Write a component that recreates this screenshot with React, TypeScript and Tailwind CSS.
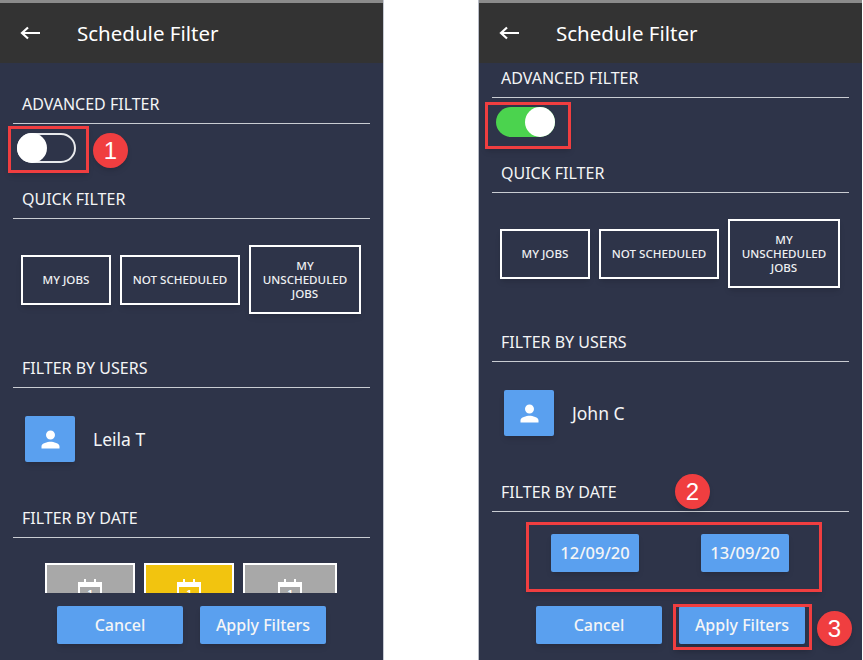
import { MdPerson } from 'react-icons/md';

const Heading = ({ title, top }: { title: string; top: string }) => (
  <div className={`${top} mx-[13px] border-b border-[#c9ccd2] pb-[7px] pl-[9px] text-[16px] leading-6 text-[#f4f5f6]`}>
    {title}
  </div>
);

const Toggle = ({ on }: { on: boolean }) =>
  on ? (
    <div className="ml-[17px] mt-[9px] flex h-[30px] w-[59px] justify-end rounded-full bg-[#4bd34e]">
      <div className="h-[30px] w-[30px] rounded-full bg-white" />
    </div>
  ) : (
    <div className="ml-[17px] mt-[9px] h-[30px] w-[59px] rounded-full border-2 border-[#e8e9ec]">
      <div className="-ml-[2px] -mt-[2px] h-[30px] w-[30px] rounded-full bg-white" />
    </div>
  );

const QuickFilters = () => (
  <div className="ml-[21px] mt-[26px] flex items-center gap-[9px] text-center text-[11.6px] font-medium leading-[14px] text-[#eef0f2]">
    <div className="flex h-[50px] w-[90px] items-center justify-center border-2 border-white shadow-md">MY JOBS</div>
    <div className="flex h-[50px] w-[120px] items-center justify-center border-2 border-white shadow-md">NOT SCHEDULED</div>
    <div className="flex h-[69px] w-[112px] items-center justify-center border-2 border-white shadow-md">
      MY
      <br />
      UNSCHEDULED
      <br />
      JOBS
    </div>
  </div>
);

const UserRow = ({ name }: { name: string }) => (
  <div className="ml-[25px] mt-[28px] flex items-center gap-[18px]">
    <div className="flex h-[46px] w-[50px] items-center justify-center rounded-[2px] bg-[#5aa0ef] shadow-md">
      <MdPerson size={27} color="white" />
    </div>
    <span className="text-[17.5px] text-[#f4f5f6]">{name}</span>
  </div>
);

const CalendarIcon = () => (
  <svg width="24" height="28" viewBox="0 0 24 28" className="mt-[13px]">
    <rect x="1" y="5" width="22" height="22" fill="none" stroke="white" strokeWidth="2" />
    <rect x="1" y="5" width="22" height="4" fill="white" />
    <path d="M7 1v6M17 1v6" stroke="white" strokeWidth="2" />
    <text x="12" y="18" textAnchor="middle" fontSize="9" fontWeight="700" fill="white">
      1
    </text>
  </svg>
);

const DateTiles = () => (
  <div className="ml-[45px] mt-[25px] flex gap-[9px]">
    <div className="flex h-[60px] w-[90px] justify-center border-2 border-white bg-[#a8a8a8]">
      <CalendarIcon />
    </div>
    <div className="flex h-[60px] w-[90px] justify-center border-2 border-white bg-[#f2c40f]">
      <CalendarIcon />
    </div>
    <div className="flex h-[60px] w-[94px] justify-center border-2 border-white bg-[#a8a8a8]">
      <CalendarIcon />
    </div>
  </div>
);

const DateButtons = () => (
  <div className="ml-[72px] mt-[22px] flex gap-[62px] text-[16.5px] font-medium text-[#f4f5f6]">
    <div className="flex h-[38px] w-[88px] items-center justify-center rounded-[2px] bg-[#5aa0ef] shadow-md">12/09/20</div>
    <div className="flex h-[38px] w-[88px] items-center justify-center rounded-[2px] bg-[#5aa0ef] shadow-md">13/09/20</div>
  </div>
);

const Phone = ({ advanced, user, children }: { advanced: boolean; user: string; children: React.ReactNode }) => (
  <div className="relative h-[660px] w-[383px] shrink-0 bg-[#2e3449] font-['Noto_Sans',sans-serif]">
    <div className="h-[3px] bg-[#8b8b8b]" />
    <div className="flex h-[60px] items-center bg-[#333333] text-white">
      <svg width="24" height="24" viewBox="0 0 24 24" fill="none" stroke="white" strokeWidth="2.2" className="ml-[19px]">
        <path d="M21 12H3M9 6.5 3 12l6 5.5" />
      </svg>
      <span className="ml-[34px] text-[20.5px]">Schedule Filter</span>
    </div>
    <div className="h-[530px] overflow-hidden">
      <Heading title="ADVANCED FILTER" top={advanced ? 'mt-[3px]' : 'mt-[29px]'} />
      <Toggle on={advanced} />
      <Heading title="QUICK FILTER" top="mt-[24px]" />
      <QuickFilters />
      <Heading title="FILTER BY USERS" top="mt-[42px]" />
      <UserRow name={user} />
      <Heading title="FILTER BY DATE" top="mt-[44px]" />
      {advanced ? <DateButtons /> : <DateTiles />}
    </div>
    <div className="mt-[13px] flex justify-center gap-[17px] text-[16px] font-medium text-[#f4f5f6]">
      <div className="flex h-[38px] w-[126px] items-center justify-center rounded-[2px] bg-[#5aa0ef] shadow-md">Cancel</div>
      <div className="flex h-[38px] w-[126px] items-center justify-center rounded-[2px] bg-[#5aa0ef] shadow-md">Apply Filters</div>
    </div>
    {children}
  </div>
);

const Badge = ({ n, pos }: { n: number; pos: string }) => (
  <div className={`absolute ${pos} flex h-[35px] w-[35px] items-center justify-center rounded-full bg-[#f03e40] font-['Liberation_Sans',sans-serif] text-[24px] text-white shadow-md`}>
    {n}
  </div>
);

export default function App() {
  return (
    <div className="flex h-[660px] w-[863px] overflow-hidden bg-white">
      <Phone advanced={false} user="Leila T">
        <div className="absolute left-[8px] top-[126px] h-[47px] w-[81px] border-[3px] border-[#f03e40] shadow-md" />
        <Badge n={1} pos="left-[93px] top-[133px]" />
      </Phone>
      <div className="w-px shrink-0 bg-[#c5c9d2]" />
      <div className="w-[94px] shrink-0" />
      <div className="w-px shrink-0 bg-[#b8bcc6]" />
      <Phone advanced user="John C">
        <div className="absolute left-[6px] top-[102px] h-[47px] w-[86px] border-[3px] border-[#f03e40] shadow-md" />
        <div className="absolute left-[47px] top-[522px] h-[70px] w-[296px] border-[3px] border-[#f03e40] shadow-md" />
        <div className="absolute left-[194px] top-[604px] h-[46px] w-[139px] border-[3px] border-[#f03e40] shadow-md" />
        <Badge n={2} pos="left-[196px] top-[474px]" />
        <Badge n={3} pos="left-[338px] top-[611px]" />
      </Phone>
    </div>
  );
}
